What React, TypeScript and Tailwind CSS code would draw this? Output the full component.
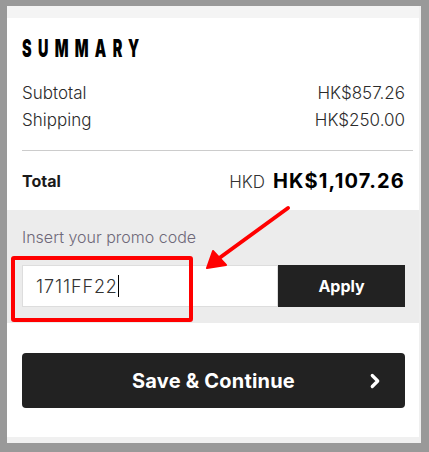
import { ChevronRight } from "lucide-react";

const sans = "font-['Inter','Liberation_Sans',sans-serif]";

function Row({ label, value }: { label: string; value: string }) {
  return (
    <div className="flex items-center justify-between text-[17px] font-light leading-[27px] text-[#2b2b2b]">
      <span>{label}</span>
      <span>{value}</span>
    </div>
  );
}

export default function App() {
  return (
    <div className={`h-[452px] w-[429px] bg-[#999999] pb-[9px] pl-[7px] pr-[8px] pt-[6px] ${sans}`}>
      <div className="relative flex h-full flex-col border-r-2 border-[#efefef] bg-white">
        <div className="h-[12px] bg-[#f4f4f4]" />

        <div className="px-[15px] pr-[14px] pt-[19px]">
          <h2 className="inline-block origin-left scale-x-[0.6] text-[24px] font-black leading-none tracking-[0.44em] text-black">
            SUMMARY
          </h2>
          <div className="mt-[17px]">
            <Row label="Subtotal" value="HK$857.26" />
            <Row label="Shipping" value="HK$250.00" />
          </div>
          <div className="mr-[-8px] mt-[16px] border-t border-[#cccccc]" />
          <div className="flex h-[59px] items-center justify-between">
            <span className="text-[16px] font-bold text-[#1a1a1a]">Total</span>
            <div className="flex items-baseline gap-[8px]">
              <span className="text-[17px] font-light text-[#333]">HKD</span>
              <span className="text-[20px] font-bold tracking-[0.06em] text-black">HK$1,107.26</span>
            </div>
          </div>
        </div>

        <div className="bg-[#ececec] px-[15px] pr-[14px] pb-[16px] pt-[17px]">
          <p className="text-[16px] font-light leading-[20px] text-[#6e6878]">Insert your promo code</p>
          <div className="mt-[18px] flex h-[42px]">
            <div className="flex flex-1 items-center border border-[#dddddd] bg-white pl-[13px]">
              <span className="text-[18px] font-light tracking-[0.05em] text-[#333]">1711FF22</span>
              <span className="h-[22px] w-px bg-black" />
            </div>
            <button className="w-[127px] bg-[#222222] text-[16px] font-bold text-white">Apply</button>
          </div>
        </div>

        <div className="px-[15px] pr-[14px] pt-[30px]">
          <button className="relative flex h-[55px] w-full items-center justify-center rounded-[4px] bg-[#222222] text-[20px] font-bold tracking-[0.01em] text-white">
            Save &amp; Continue
            <ChevronRight className="absolute right-[19px] h-[22px] w-[22px]" strokeWidth={3.5} />
          </button>
        </div>

        <div className="mt-auto h-[6px] bg-[#f0f0f0]" />

        {/* annotation: red box + arrow */}
        <div className="absolute left-[4px] top-[250px] h-[66px] w-[182px] rounded-[3px] border-4 border-[#ff0000]" />
        <svg className="absolute left-0 top-0" width="414" height="437" viewBox="0 0 414 437">
          <line x1="281" y1="202" x2="211" y2="253" stroke="#ff0000" strokeWidth="4" strokeLinecap="round" />
          <polygon points="200,262 206,245 219,259" fill="#ff0000" stroke="#ff0000" strokeWidth="2" strokeLinejoin="round" />
        </svg>
      </div>
    </div>
  );
}
